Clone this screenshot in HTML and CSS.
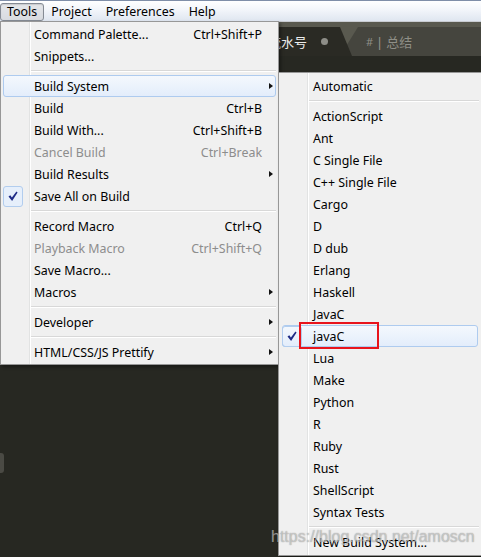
FILE: index.html
```html
<!DOCTYPE html>
<html>
<head>
<meta charset="utf-8">
<link rel="stylesheet" href="styles.css">
</head>
<body>
<div class="menubar">
  <div class="mb-item pressed">Tools</div>
  <div class="mb-item">Project</div>
  <div class="mb-item">Preferences</div>
  <div class="mb-item">Help</div>
</div>
<div class="tabbar">
  <div class="tab active"><span class="tab-title">流水号</span><span class="dot"></span></div>
  <div class="tab inactive"><span class="hash">#</span><span class="bar">|</span><span>总结</span></div>
</div>
<div class="editor">
  <div class="blob"></div>
</div>

<div class="menu main">
  <div class="row"><span class="gut"></span><span class="label">Command Palette...</span><span class="key">Ctrl+Shift+P</span><span class="tail"></span></div>
  <div class="row"><span class="gut"></span><span class="label">Snippets...</span><span class="tail"></span></div>
  <div class="sep"></div>
  <div class="row hl"><span class="gut"></span><span class="label">Build System</span><span class="tail"><i class="arrow"></i></span></div>
  <div class="row"><span class="gut"></span><span class="label">Build</span><span class="key">Ctrl+B</span><span class="tail"></span></div>
  <div class="row"><span class="gut"></span><span class="label">Build With...</span><span class="key">Ctrl+Shift+B</span><span class="tail"></span></div>
  <div class="row dis"><span class="gut"></span><span class="label">Cancel Build</span><span class="key">Ctrl+Break</span><span class="tail"></span></div>
  <div class="row"><span class="gut"></span><span class="label">Build Results</span><span class="tail"><i class="arrow"></i></span></div>
  <div class="row"><span class="gut"><span class="chk"><svg width="10" height="11" viewBox="0 0 10 11"><path d="M0.5 5.6 L2.3 4.2 L3.9 6.6 L8.4 0.6 L9.6 1.6 L4.1 10 Z" fill="#1f2b86"/></svg></span></span><span class="label">Save All on Build</span><span class="tail"></span></div>
  <div class="sep"></div>
  <div class="row"><span class="gut"></span><span class="label">Record Macro</span><span class="key">Ctrl+Q</span><span class="tail"></span></div>
  <div class="row dis"><span class="gut"></span><span class="label">Playback Macro</span><span class="key">Ctrl+Shift+Q</span><span class="tail"></span></div>
  <div class="row"><span class="gut"></span><span class="label">Save Macro...</span><span class="tail"></span></div>
  <div class="row"><span class="gut"></span><span class="label">Macros</span><span class="tail"><i class="arrow"></i></span></div>
  <div class="sep"></div>
  <div class="row"><span class="gut"></span><span class="label">Developer</span><span class="tail"><i class="arrow"></i></span></div>
  <div class="sep"></div>
  <div class="row"><span class="gut"></span><span class="label">HTML/CSS/JS Prettify</span><span class="tail"><i class="arrow"></i></span></div>
</div>

<div class="menu sub">
  <div class="row"><span class="gut"></span><span class="label">Automatic</span></div>
  <div class="sep"></div>
  <div class="row"><span class="gut"></span><span class="label">ActionScript</span></div>
  <div class="row"><span class="gut"></span><span class="label">Ant</span></div>
  <div class="row"><span class="gut"></span><span class="label">C Single File</span></div>
  <div class="row"><span class="gut"></span><span class="label">C++ Single File</span></div>
  <div class="row"><span class="gut"></span><span class="label">Cargo</span></div>
  <div class="row"><span class="gut"></span><span class="label">D</span></div>
  <div class="row"><span class="gut"></span><span class="label">D dub</span></div>
  <div class="row"><span class="gut"></span><span class="label">Erlang</span></div>
  <div class="row"><span class="gut"></span><span class="label">Haskell</span></div>
  <div class="row"><span class="gut"></span><span class="label">JavaC</span></div>
  <div class="row hl"><span class="gut"><span class="chk plain"><svg width="10" height="11" viewBox="0 0 10 11"><path d="M0.5 5.6 L2.3 4.2 L3.9 6.6 L8.4 0.6 L9.6 1.6 L4.1 10 Z" fill="#1f2b86"/></svg></span></span><span class="label">javaC</span></div>
  <div class="row"><span class="gut"></span><span class="label">Lua</span></div>
  <div class="row"><span class="gut"></span><span class="label">Make</span></div>
  <div class="row"><span class="gut"></span><span class="label">Python</span></div>
  <div class="row"><span class="gut"></span><span class="label">R</span></div>
  <div class="row"><span class="gut"></span><span class="label">Ruby</span></div>
  <div class="row"><span class="gut"></span><span class="label">Rust</span></div>
  <div class="row"><span class="gut"></span><span class="label">ShellScript</span></div>
  <div class="row"><span class="gut"></span><span class="label">Syntax Tests</span></div>
  <div class="sep"></div>
  <div class="row"><span class="gut"></span><span class="label">New Build System...</span></div>
</div>

<div class="redbox"></div>
<div class="watermark">https://blog.csdn.net/amoscn</div>
</body>
</html>
```
FILE: styles.css
```css
html, body {
  margin: 0;
  padding: 0;
}
body {
  width: 481px;
  height: 557px;
  overflow: hidden;
  display: flex;
  flex-direction: column;
  background: #272822;
  font-family: "Noto Sans", "Noto Sans CJK SC", sans-serif;
  font-size: 12.4px;
  color: #000;
}

/* menubar */
.menubar {
  height: 20px;
  border-top: 1px solid #7f8ea8;
  border-bottom: 1px solid #c9ccd2;
  background: linear-gradient(to bottom, #ffffff 0%, #f2f5fa 45%, #dfe6f0 100%);
  display: flex;
  align-items: flex-start;
}
.mb-item {
  height: 16px;
  margin-top: 2px;
  padding: 0 6px;
  border: 1px solid transparent;
  border-radius: 3px;
  line-height: 15px;
  white-space: nowrap;
}
.mb-item.pressed {
  border-color: #858b94;
  background: linear-gradient(to bottom, #e4e6e9, #d8dbe0);
  box-shadow: inset 0 1px 1px rgba(0,0,0,0.12);
}

/* tabs */
.tabbar {
  height: 34px;
  background: #59594f;
  display: flex;
  align-items: flex-end;
  padding-left: 170px;
  flex-shrink: 0;
}
.tab {
  height: 29px;
  display: flex;
  align-items: center;
  font-family: "Noto Sans CJK SC", "Noto Sans", sans-serif;
  font-size: 13px;
}
.tab.active {
  width: 182px;
  position: relative;
  z-index: 1;
  background: #2a2a24;
  clip-path: polygon(12px 0, calc(100% - 12px) 0, 100% 100%, 0 100%);
  justify-content: flex-end;
  padding-right: 24px;
  box-sizing: border-box;
  color: #ececec;
}
.tab-title {
  margin-right: 14px;
}
.dot {
  width: 7px;
  height: 7px;
  border-radius: 50%;
  background: #8e8e88;
}
.tab.inactive {
  flex: 1;
  margin-left: -12px;
  background: #45453e;
  clip-path: polygon(18px 0, 100% 0, 100% 100%, 0 100%);
  padding-left: 26px;
  color: #8f8f87;
  gap: 3px;
}
.hash {
  font-size: 11px;
  font-family: "Noto Sans", sans-serif;
}
.bar {
  font-family: "Noto Sans", sans-serif;
  color: #9a9a92;
}

.editor {
  flex: 1;
  background: #272822;
}
.blob {
  margin-top: 397px;
  width: 4px;
  height: 20px;
  background: #4a4a44;
  border-radius: 0 3px 3px 0;
}

/* menus */
.menu {
  position: absolute;
  box-sizing: border-box;
  border: 1px solid #979797;
  padding: 1px 0;
  background: linear-gradient(to right, #f0f0f0 28px, #e2e3e3 28px, #e2e3e3 29px, #ffffff 29px, #ffffff 30px, #f0f0f0 30px);
  box-shadow: 2px 2px 3px rgba(0,0,0,0.35);
}
.menu.main {
  top: 21px;
  left: 0;
  width: 279px;
  z-index: 2;
}
.menu.sub {
  top: 72px;
  left: 278px;
  width: 204px;
  padding: 2px 0;
  z-index: 3;
}
.row {
  height: 20px;
  margin: 0 2px;
  border: 1px solid transparent;
  border-radius: 3px;
  display: flex;
  align-items: center;
  white-space: nowrap;
}
.sub .row {
  margin: 0 3px;
}
.row.hl {
  border-color: #aecbef;
  background: linear-gradient(to bottom, #f4f8fd, #e3edfb);
}
.row.dis {
  color: #8d8d8d;
}
.gut {
  width: 30px;
  height: 20px;
  flex-shrink: 0;
  display: flex;
  align-items: center;
}
.label {
  flex: 1;
}
.tail {
  width: 11px;
  flex-shrink: 0;
  display: flex;
  justify-content: flex-end;
  padding-right: 2px;
}
.arrow {
  width: 0;
  height: 0;
  border-left: 4px solid #111;
  border-top: 3.5px solid transparent;
  border-bottom: 3.5px solid transparent;
}
.chk {
  margin-left: -1px;
  width: 18px;
  height: 19px;
  border: 1px solid #b2cdee;
  border-radius: 3px;
  background: #e6effb;
  display: flex;
  align-items: center;
  justify-content: center;
}
.chk.plain {
  background: transparent;
}
.sep {
  height: 0;
  margin: 3px 2px 3px 30px;
  border-top: 1px solid #d8d8d8;
  border-bottom: 1px solid #ffffff;
}

/* overlays */
.redbox {
  position: absolute;
  left: 299px;
  top: 322px;
  width: 80px;
  height: 27px;
  box-sizing: border-box;
  border: 2px solid #e8141c;
  z-index: 4;
}
.watermark {
  position: absolute;
  left: 271px;
  top: 528px;
  z-index: 5;
  font-family: "Liberation Sans", Arial, sans-serif;
  font-size: 16px;
  color: rgba(235,235,235,0.55);
  text-shadow: 0 0 1px rgba(60,60,60,0.6);
  white-space: nowrap;
}
```
